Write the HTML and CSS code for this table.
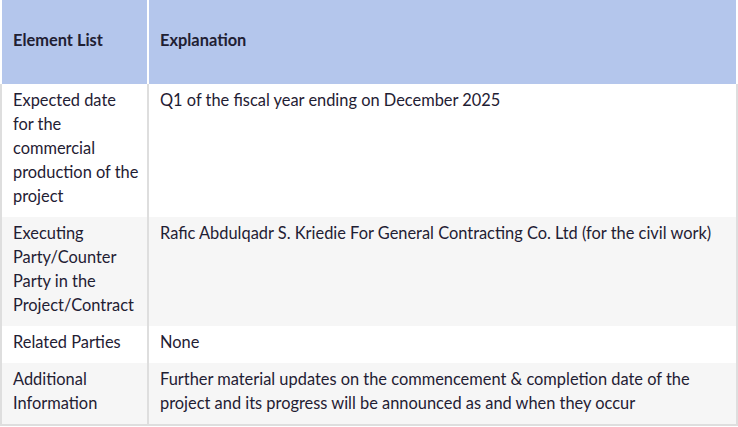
FILE: index.html
```html
<!DOCTYPE html>
<html>
<head>
<meta charset="utf-8">
<link rel="stylesheet" href="styles.css">
</head>
<body>
<table class="info-table">
  <thead>
    <tr>
      <th class="col-label">Element List</th>
      <th class="col-text">Explanation</th>
    </tr>
  </thead>
  <tbody>
    <tr class="row-white">
      <td class="col-label">Expected date for&nbsp;the commercial production of the project</td>
      <td class="col-text">Q1 of the fiscal year ending on December 2025</td>
    </tr>
    <tr class="row-grey">
      <td class="col-label">Executing Party/Counter Party in the Project/Contract</td>
      <td class="col-text">Rafic Abdulqadr S. Kriedie For General Contracting Co. Ltd (for the civil work)</td>
    </tr>
    <tr class="row-white">
      <td class="col-label">Related Parties</td>
      <td class="col-text">None</td>
    </tr>
    <tr class="row-grey last">
      <td class="col-label">Additional Information</td>
      <td class="col-text">Further material updates on the commencement &amp; completion date of the project and its progress will be announced as and when they occur</td>
    </tr>
  </tbody>
</table>
</body>
</html>
```
FILE: styles.css
```css
html, body {
  margin: 0;
  padding: 0;
  background: #ffffff;
}
.info-table {
  border-collapse: separate;
  border-spacing: 0;
  width: 738px;
  table-layout: fixed;
  font-family: "Lato", "Open Sans", sans-serif;
  font-size: 16.4px;
  line-height: 24px;
  color: #1f2033;
}
.info-table th {
  background: #b4c6ec;
  height: 84px;
  padding: 0 11px 4px;
  text-align: left;
  font-weight: 700;
  border-left: 2px solid #ffffff;
  box-sizing: border-box;
}
.info-table th.col-label { width: 147px; }
.info-table th.col-text { border-right: 2px solid #ffffff; }
.info-table td {
  vertical-align: top;
  padding: 4px 11px 9px;
  border-left: 2px solid #dedede;
}
.info-table td.col-label { padding-right: 6px; }
.info-table td.col-text { border-right: 2px solid #dedede; }
.row-white td { background: #ffffff; }
.row-grey td { background: #f6f6f6; }
.last td { border-bottom: 2px solid #dedede; }
```
